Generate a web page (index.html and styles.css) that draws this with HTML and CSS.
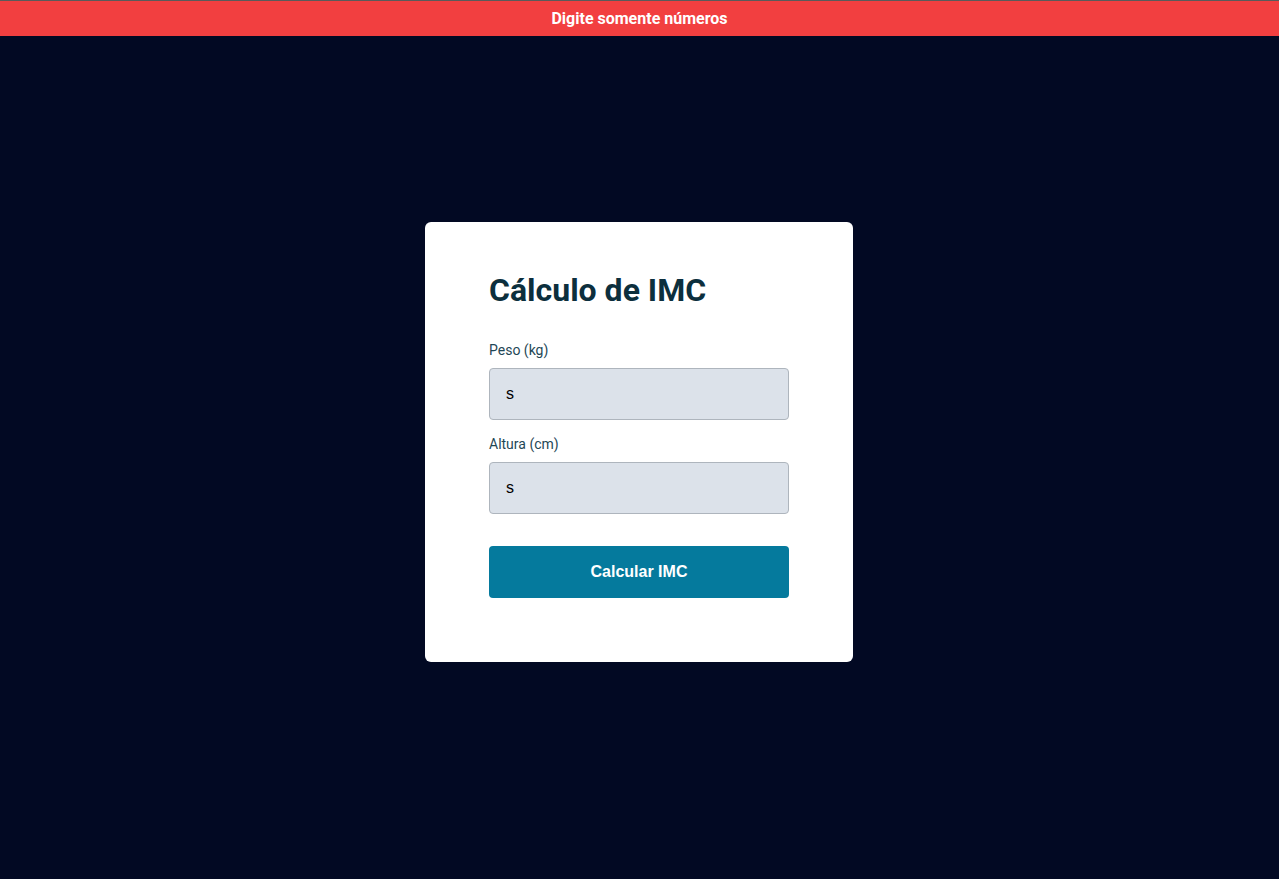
FILE: index.html
```html
<!DOCTYPE html>
<html lang="pt-BR">
<head>
<meta charset="utf-8">
<title>Cálculo de IMC</title>
<link rel="stylesheet" href="styles.css">
</head>
<body>
<div class="alert">Digite somente números</div>
<main class="page">
  <form class="card">
    <h1 class="title">Cálculo de IMC</h1>
    <label class="label" for="peso">Peso (kg)</label>
    <input class="field" id="peso" type="text" value="s">
    <label class="label" for="altura">Altura (cm)</label>
    <input class="field field-last" id="altura" type="text" value="s">
    <button class="btn" type="button">Calcular IMC</button>
  </form>
</main>
</body>
</html>
```
FILE: styles.css
```css
* { box-sizing: border-box; }
html, body { margin: 0; padding: 0; }
body {
  background: #020923;
  font-family: Roboto, "Liberation Sans", Arial, sans-serif;
  min-height: 100vh;
}
.alert {
  position: absolute;
  top: 0;
  left: 0;
  right: 0;
  height: 36px;
  border-top: 1px solid #5a5a5a;
  background: #f23f40;
  color: #ffffff;
  font-weight: 700;
  font-size: 16px;
  line-height: 35px;
  text-align: center;
}
.page {
  min-height: 100vh;
  display: flex;
  align-items: center;
  justify-content: center;
  padding: 5px 1px 0 0;
}
.card {
  width: 428px;
  background: #ffffff;
  border-radius: 6px;
  padding: 50px 64px 64px;
  display: flex;
  flex-direction: column;
}
.title {
  margin: 0 0 31px;
  font-size: 32px;
  line-height: 37px;
  font-weight: 700;
  color: #0c2f3d;
}
.label {
  font-size: 14px;
  line-height: 20px;
  color: #1f4756;
  margin-bottom: 8px;
}
.field {
  height: 52px;
  width: 100%;
  background: #dce2ea;
  border: 1px solid #aeb5bd;
  border-radius: 4px;
  padding: 0 16px;
  font-family: "Liberation Sans", Arial, sans-serif;
  font-size: 16px;
  color: #000000;
  margin: 0 0 14px;
  outline: none;
}
.field-last { margin-bottom: 32px; }
.btn {
  height: 52px;
  width: 100%;
  border: none;
  border-radius: 4px;
  background: #057a9d;
  color: #ffffff;
  font-family: "Liberation Sans", Arial, sans-serif;
  font-weight: 700;
  font-size: 16px;
  cursor: pointer;
}
```
